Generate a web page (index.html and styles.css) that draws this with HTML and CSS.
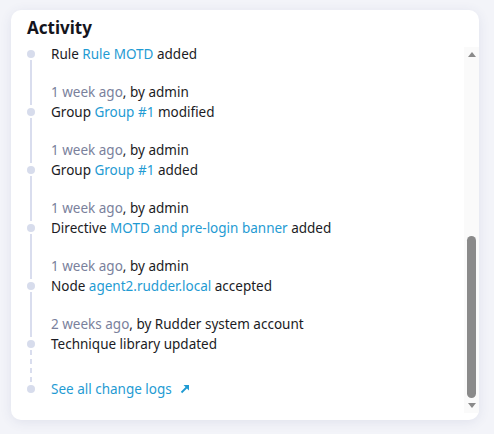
FILE: index.html
```html
<!DOCTYPE html>
<html lang="en">
<head>
    <meta charset="UTF-8">
    <meta name="viewport" content="width=device-width, initial-scale=1.0">
    <title>Activity</title>
    <link rel="stylesheet" href="styles.css">
</head>
<body>

    <div class="card">
        <h2 class="card-title">Activity</h2>

        <div class="activity-body">
            <div class="activity-scroll" id="activityScroll">
                <ul class="timeline">
                    <li>
                        <div class="meta"><span class="when">4 weeks ago</span>, by admin</div>
                        <div class="what">Node <a href="#">server.rudder.local</a> modified</div>
                    </li>
                    <li>
                        <div class="meta"><span class="when">3 weeks ago</span>, by admin</div>
                        <div class="what">Group <a href="#">All Linux nodes</a> modified</div>
                    </li>
                    <li>
                        <div class="meta"><span class="when">3 weeks ago</span>, by admin</div>
                        <div class="what">Node <a href="#">agent1.rudder.local</a> accepted</div>
                    </li>
                    <li>
                        <div class="meta"><span class="when">2 weeks ago</span>, by admin</div>
                        <div class="what">Directive <a href="#">SSH server configuration</a> added</div>
                    </li>
                    <li>
                        <div class="meta"><span class="when">2 weeks ago</span>, by admin</div>
                        <div class="what">Rule <a href="#">Base security</a> modified</div>
                    </li>
                    <li>
                        <div class="meta"><span class="when">1 week ago</span>, by admin</div>
                        <div class="what">Rule <a href="#">Base security</a> added</div>
                    </li>
                    <li>
                        <div class="meta"><span class="when">1 week ago</span>, by admin</div>
                        <div class="what">Rule <a href="#">Rule MOTD</a> added</div>
                    </li>
                    <li>
                        <div class="meta"><span class="when">1 week ago</span>, by admin</div>
                        <div class="what">Group <a href="#">Group #1</a> modified</div>
                    </li>
                    <li>
                        <div class="meta"><span class="when">1 week ago</span>, by admin</div>
                        <div class="what">Group <a href="#">Group #1</a> added</div>
                    </li>
                    <li>
                        <div class="meta"><span class="when">1 week ago</span>, by admin</div>
                        <div class="what">Directive <a href="#">MOTD and pre-login banner</a> added</div>
                    </li>
                    <li>
                        <div class="meta"><span class="when">1 week ago</span>, by admin</div>
                        <div class="what">Node <a href="#">agent2.rudder.local</a> accepted</div>
                    </li>
                    <li>
                        <div class="meta"><span class="when">2 weeks ago</span>, by Rudder system account</div>
                        <div class="what">Technique library updated</div>
                    </li>
                    <li class="more">
                        <a href="#">See all change logs
                            <svg class="ext-icon" width="10" height="10" viewBox="0 0 10 10">
                                <path d="M1.5 8.5 L8 2" stroke="currentColor" stroke-width="1.8" fill="none"/>
                                <path d="M3.5 1 H9 V6.5 Z" fill="currentColor"/>
                            </svg>
                        </a>
                    </li>
                </ul>
            </div>

            <div class="scrollbar">
                <span class="sb-btn sb-up"></span>
                <div class="sb-track" id="sbTrack">
                    <div class="sb-thumb" id="sbThumb"></div>
                </div>
                <span class="sb-btn sb-down"></span>
            </div>
        </div>
    </div>

    <script src="script.js"></script>
</body>
</html>
```

FILE: styles.css
```css
body {
    font-family: "Noto Sans", sans-serif;
    background: #f3f4f9;
    margin: 0;
    padding: 10px 15px 14px 11px;
    color: #1b1b24;
}
.card {
    width: 468px;
    height: 410px;
    background: #fff;
    border-radius: 10px;
    box-shadow: 0 2px 12px rgba(60, 70, 130, 0.10);
    display: flex;
    flex-direction: column;
    padding-bottom: 7px;
    box-sizing: border-box;
    overflow: hidden;
}
.card-title {
    margin: 0;
    padding: 6px 16px 0;
    height: 31px;
    font-size: 17px;
    font-weight: 700;
    line-height: 24px;
    color: #14141c;
}
.activity-body {
    flex: 1;
    min-height: 0;
    display: flex;
}
.activity-scroll {
    flex: 1;
    overflow-y: scroll;
    scrollbar-width: none;
}
.activity-scroll::-webkit-scrollbar {
    display: none;
}

/* scrollbar column */
.scrollbar {
    width: 15px;
    background: #fafafa;
    display: flex;
    flex-direction: column;
}
.sb-btn {
    height: 15px;
    display: flex;
    align-items: center;
    justify-content: center;
}
.sb-btn::before {
    content: "";
    width: 0;
    height: 0;
    border-left: 4.5px solid transparent;
    border-right: 4.5px solid transparent;
}
.sb-up::before {
    border-bottom: 5px solid #8a8a8a;
}
.sb-down::before {
    border-top: 5px solid #8a8a8a;
}
.sb-track {
    flex: 1;
    display: flex;
    flex-direction: column;
    align-items: center;
}
.sb-thumb {
    width: 9px;
    background: #8a8a8a;
    border-radius: 5px;
}

.timeline {
    list-style: none;
    margin: 0;
    padding: 22px 0 14px 40px;
    font-size: 13.5px;
    line-height: 20px;
}
.timeline li {
    position: relative;
    margin-bottom: 18px;
}
.timeline li.more {
    margin-top: 25px;
    margin-bottom: 0;
}
.timeline a {
    color: #1f9bd3;
    text-decoration: none;
}
.when {
    color: #7a819c;
}
/* timeline dot on the last line of each entry */
.timeline li::before {
    content: "";
    position: absolute;
    left: -24px;
    bottom: 6px;
    width: 8px;
    height: 8px;
    border-radius: 50%;
    background: #d7dcec;
}
/* connector up to the previous dot */
.timeline li::after {
    content: "";
    position: absolute;
    left: -21px;
    top: -22px;
    bottom: 17px;
    width: 2px;
    background: #d9ddee;
}
.timeline li:first-child::after {
    display: none;
}
.timeline li.more::after {
    top: -29px;
    background: repeating-linear-gradient(to bottom, #d9ddee 0 5px, transparent 5px 9px);
}
.ext-icon {
    margin-left: 5px;
}
```

FILE: script.js
```js
// keep the latest entries in view and size the thumb to match
var box = document.getElementById('activityScroll');
var track = document.getElementById('sbTrack');
var thumb = document.getElementById('sbThumb');

box.scrollTop = box.scrollHeight;

function syncThumb() {
    var trackH = track.clientHeight;
    var ratio = box.clientHeight / box.scrollHeight;
    thumb.style.height = Math.round(trackH * ratio) + 'px';
    thumb.style.marginTop = Math.round(trackH * box.scrollTop / box.scrollHeight) + 'px';
}

box.addEventListener('scroll', syncThumb);
syncThumb();
```
